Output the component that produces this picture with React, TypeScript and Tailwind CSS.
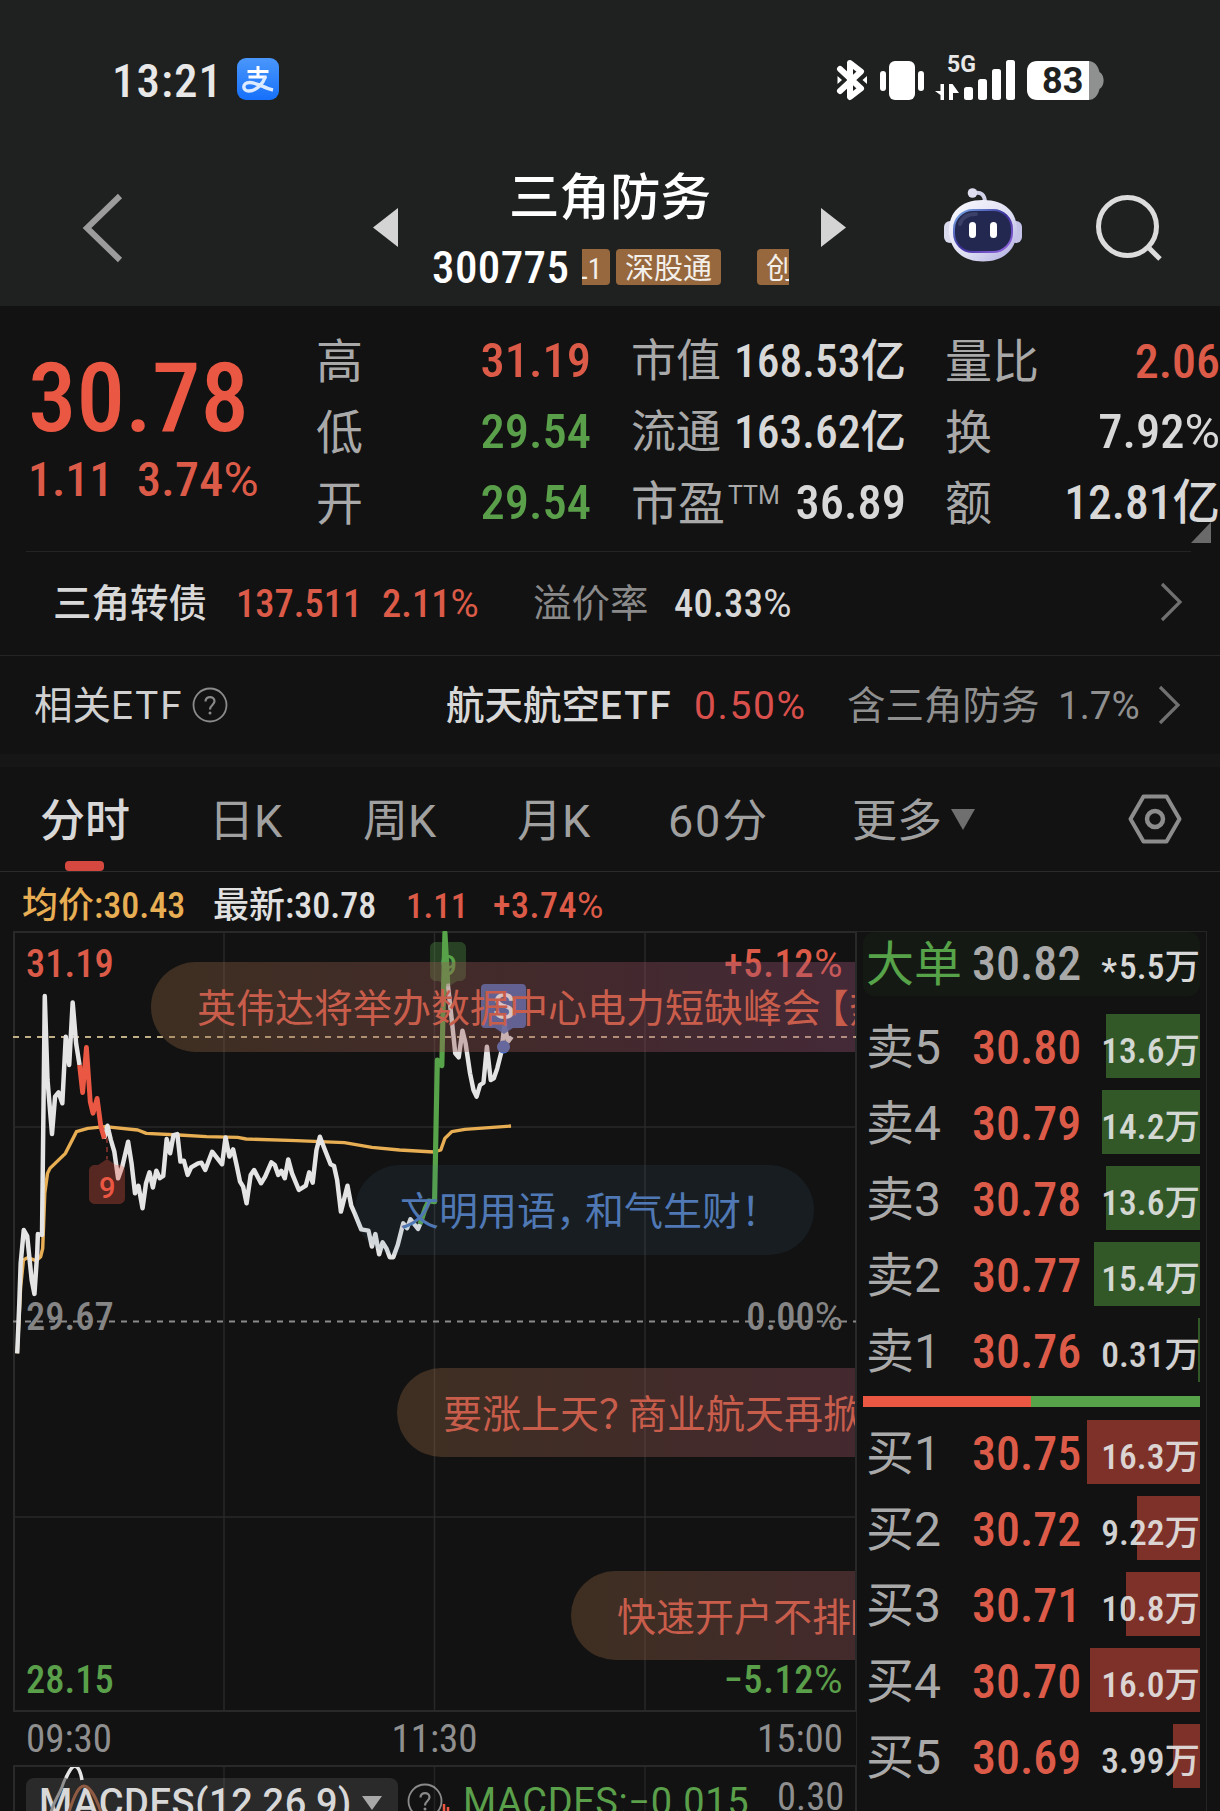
import React from 'react';
import clsx from 'clsx';

type Level = { label: string; price: string; volume: string; bar: number };

const SELL_LEVELS: Level[] = [
  { label: '卖5', price: '30.80', volume: '13.6万', bar: 94 },
  { label: '卖4', price: '30.79', volume: '14.2万', bar: 98 },
  { label: '卖3', price: '30.78', volume: '13.6万', bar: 94 },
  { label: '卖2', price: '30.77', volume: '15.4万', bar: 106 },
  { label: '卖1', price: '30.76', volume: '0.31万', bar: 2 },
];

const BUY_LEVELS: Level[] = [
  { label: '买1', price: '30.75', volume: '16.3万', bar: 113 },
  { label: '买2', price: '30.72', volume: '9.22万', bar: 63 },
  { label: '买3', price: '30.71', volume: '10.8万', bar: 74 },
  { label: '买4', price: '30.70', volume: '16.0万', bar: 110 },
  { label: '买5', price: '30.69', volume: '3.99万', bar: 27 },
];

// Chart series, drawn in a 1568x1320 plot space (see the <g> transform in PriceChart)
const PRICE_OPEN = '50,1300 56,1150 60,1030 69,930 79,948 92,1080 100,1122 108,1000 110,942 122,945 130,228 138,480 151,642 160,530 170,517 181,550 191,350 201,435 211,247 221,370 231,435';
const PRICE_DOWN = '231,435 240,518 251,382 262,545 270,580 282,535 293,620 303,656';
const PRICE_MID = '303,656 312,617 322,660 332,695 343,775 355,740 372,665 382,730 392,820 402,797 414,865 424,790 434,757 444,803 454,752 464,775 474,768 484,657 494,700 504,645 515,642 524,725 534,722 545,765 555,742 575,730 585,728 596,750 616,695 645,733 655,652 666,710 677,688 687,735 697,785 706,800 716,850 728,765 738,750 758,790 770,770 788,727 798,735 808,765 817,752 827,775 837,718 848,760 868,810 888,797 898,757 908,788 919,690 929,650 940,680 960,733 970,738 979,780 990,875 1009,797 1020,857 1030,880 1049,928 1070,932 1080,980 1090,942 1101,1003 1111,967 1122,985 1132,1012 1142,1012 1155,975 1171,910 1182,925 1192,898 1214,927 1220,912';
const PRICE_UP = '1220,912 1235,865 1245,843 1262,845 1270,420 1283,437 1292,38 1300,190';
const PRICE_CLOSE = '1300,190 1312,300 1322,400 1332,412 1343,332 1352,370 1365,460 1375,510 1384,530 1394,495 1404,488 1414,380 1425,480 1434,475 1444,445 1455,400 1465,315 1475,365 1486,350';
const AVERAGE = '50,1300 60,1100 68,1020 80,1013 105,1022 118,1010 124,985 130,820 138,760 145,745 190,700 222,635 255,625 305,620 400,630 425,640 520,645 600,650 690,652 715,657 860,662 1000,668 1080,682 1160,690 1260,696 1280,690 1292,655 1312,635 1350,628 1484,618';

const AlipayIcon = () => (
  <svg width="42" height="42" viewBox="0 0 42 42" fill="none">
    <defs>
      <linearGradient id="alipay" x1="0" y1="0" x2="0" y2="1">
        <stop stopColor="#4a97fb" />
        <stop offset="1" stopColor="#1670fb" />
      </linearGradient>
    </defs>
    <rect width="42" height="42" rx="9" fill="url(#alipay)" />
    <path d="M10.500 13.500H31.500M21 8V19M11.500 19H29.500" stroke="#fff" strokeWidth="3" />
    <path d="M28.500 18.500C26 26 19 33 12 33C5 33 5 24.500 12.500 24.500C20 24.500 27 30 36 32" stroke="#dcebff" strokeWidth="3.400" />
  </svg>
);

const BluetoothIcon = () => (
  <svg width="32" height="42" viewBox="0 0 32 42" fill="none">
    <path d="M4 10L25 29.500L14 38V4L25 12.500L4 32" stroke="#fff" strokeWidth="6" strokeLinecap="round" strokeLinejoin="round" />
    <path d="M1.500 17L6 21L1.500 25ZM31 17L26.500 21L31 25Z" fill="#fff" />
  </svg>
);

const VibrateIcon = () => (
  <svg width="44" height="40" viewBox="0 0 44 40" fill="#fff">
    <rect x="9" y="0" width="26" height="39" rx="6" />
    <rect x="0" y="10" width="6" height="20" rx="3" />
    <rect x="38" y="10" width="6" height="20" rx="3" />
  </svg>
);

const SignalIcon = () => (
  <svg width="80" height="46" viewBox="0 0 80 46" fill="#fff">
    <path d="M9 29V45H5.500V40L0 36H5.500V29ZM14 29H17.500L24 38H18V45H14Z" />
    <rect x="29" y="32" width="9" height="13" rx="2.500" />
    <rect x="43" y="24" width="9" height="21" rx="2.500" />
    <rect x="57" y="14" width="9" height="31" rx="2.500" />
    <rect x="71" y="5" width="9" height="40" rx="2.500" />
  </svg>
);

const BatteryIcon = () => (
  <svg width="77" height="40" viewBox="0 0 77 40">
    <path d="M61 0C68 0 71 5 72.500 11C78 14 78 25 72.500 28C71 34 68 39 61 39Z" fill="#8f9190" />
    <path d="M10 0H62V39H10C4 39 0 35 0 29V10C0 4 4 0 10 0Z" fill="#fff" />
  </svg>
);

const RobotIcon = () => (
  <svg width="78" height="74" viewBox="0 0 78 74" fill="none">
    <defs>
      <linearGradient id="shell" x1="0.1" y1="0.1" x2="0.9" y2="0.9">
        <stop stopColor="#f6f6fd" />
        <stop offset="0.6" stopColor="#dcdcf2" />
        <stop offset="1" stopColor="#b9b6e4" />
      </linearGradient>
      <linearGradient id="rim" x1="0" y1="0" x2="1" y2="1">
        <stop stopColor="#7fb4ee" />
        <stop offset="0.5" stopColor="#3a2f9a" />
        <stop offset="1" stopColor="#9d6ce8" />
      </linearGradient>
    </defs>
    <path d="M29 5.500C37 3 41 7 41 15" stroke="#cfcfe8" strokeWidth="4" />
    <circle cx="28.500" cy="5" r="4.800" fill="#dedef0" />
    <rect x="0" y="33" width="12" height="22" rx="6" fill="#d9d9ee" />
    <rect x="66" y="33" width="12" height="22" rx="6" fill="#c4c2e6" />
    <path d="M39 12C62 12 73 25 73 42C73 61 60 73.500 39 73.500C18 73.500 5 61 5 42C5 25 16 12 39 12Z" fill="url(#shell)" />
    <rect x="10" y="22" width="58" height="42" rx="19" fill="#232850" stroke="url(#rim)" strokeWidth="2" />
    <path d="M16 36C18 29 24 26 32 26" stroke="#4a5078" strokeWidth="4" strokeLinecap="round" opacity="0.6" />
    <rect x="25" y="34" width="7" height="16" rx="3.500" fill="#fff" />
    <rect x="46" y="34" width="7" height="16" rx="3.500" fill="#fff" />
  </svg>
);

const Chevron = ({ className }: { className?: string }) => (
  <svg className={className} width="24" height="40" viewBox="0 0 24 40" fill="none">
    <path d="M3 2L21 20L3 38" stroke="#707070" strokeWidth="3.200" />
  </svg>
);

const HelpIcon = ({ className }: { className?: string }) => (
  <svg className={className} width="36" height="36" viewBox="0 0 36 36" fill="none" stroke="#8a8a8a">
    <circle cx="18" cy="18" r="16.500" strokeWidth="1.800" />
    <path d="M13.500 14.500C13.500 8.500 22.500 8.800 22.500 14.300C22.500 18 18 18 18 22.500" strokeWidth="2.200" />
    <circle cx="18" cy="26" r="1.500" fill="#8a8a8a" stroke="none" />
  </svg>
);

// Percent values use a lighter, wider % sign than the digits
const Percent = ({ value }: { value: string }) => (
  <>
    {value.replace('%', '')}
    <span className="font-['Roboto'] font-normal">%</span>
  </>
);

const StatusBar = () => (
  <div className="flex h-[160px] items-center pb-[2px] pl-[112px]">
    <span className="w-[125px] pt-[2px] text-[47px] font-medium tracking-[1px] text-[#e8e8e8]">13:21</span>
    <AlipayIcon />
    <div className="ml-[557px] flex items-center pt-px">
      <BluetoothIcon />
      <div className="mt-[2px] ml-3"><VibrateIcon /></div>
      <div className="relative -mt-[3px] ml-[11px]">
        <SignalIcon />
        <span className="absolute -top-[2px] left-[12px] font-['Roboto'] text-[23px] font-bold text-[#e8e8e8]">5G</span>
      </div>
      <div className="relative mt-[2px] ml-3">
        <BatteryIcon />
        <span className="absolute top-[2px] left-[15px] font-['Roboto'] text-[36px] leading-[36px] font-bold text-[#1f2120]">83</span>
      </div>
    </div>
  </div>
);

const TAG = 'h-[36px] shrink-0 rounded-[4px] bg-[#97683d] text-[29px] leading-[40px] text-[#f3efea]';

const TitleBar = () => (
  <div className="flex h-[145px] items-start">
    <svg className="mt-[33px] ml-[82px]" width="42" height="70" viewBox="0 0 42 70" fill="none">
      <path d="M38 3L5 35L38 67" stroke="#9c9c9c" strokeWidth="6" />
    </svg>
    <svg className="mt-[48px] ml-[249px]" width="25" height="39" viewBox="0 0 25 39">
      <path d="M25 0V39L0 19.500Z" fill="#d4d4d4" />
    </svg>
    <div className="ml-[34px] w-[357px]">
      <div className="pt-[12px] pr-px text-center text-[50.500px] leading-[52px] font-medium text-white">三角防务</div>
      <div className="mt-[25px] flex h-[36px] items-center">
        <span className="w-[150px] text-[45px] font-medium tracking-[0.400px] text-white">300775</span>
        <div className="flex w-[207px] items-center overflow-hidden">
          <div className={clsx(TAG, '-ml-[14px] w-[42px] pl-[6px]')}>L1</div>
          <div className={clsx(TAG, 'ml-[6px] w-[105px] text-center')}>深股通</div>
          <div className={clsx(TAG, 'ml-[36px] w-[60px] pl-[9px]')}>创</div>
        </div>
      </div>
    </div>
    <svg className="mt-[48px] ml-[32px]" width="25" height="39" viewBox="0 0 25 39">
      <path d="M0 0V39L25 19.500Z" fill="#d4d4d4" />
    </svg>
    <div className="mt-[28px] ml-[98px]"><RobotIcon /></div>
    <svg className="mt-[34px] ml-[73px]" width="68" height="68" viewBox="0 0 68 68" fill="none" stroke="#dcdcdc">
      <circle cx="32.500" cy="32.500" r="29" strokeWidth="5" />
      <path d="M53 53L65 65" strokeWidth="5" />
    </svg>
  </div>
);

type StatProps = { label: string; sup?: string; value: React.ReactNode; labelSize?: string; size?: string; tone?: string };

const Stat = ({ label, sup, value, labelSize = 'text-[47px]', size = 'text-[48.500px]', tone = 'text-[#d8d8d8]' }: StatProps) => (
  <div className="flex h-[71px] items-center justify-between whitespace-nowrap">
    <span className={clsx('flex items-center text-[#a9a9a9]', labelSize)}>
      {label}
      {sup && <span className="-mt-[16px] ml-[3px] font-['Roboto'] text-[25px]">{sup}</span>}
    </span>
    <span className={clsx('font-medium', size, tone)}>{value}</span>
  </div>
);

const QuoteSummary = () => (
  <div className="relative flex h-[246px]">
    <div className="w-[316px] pl-[28px] text-[#ea5743]">
      <div className="mt-[46px] text-[97px] leading-[92px] font-medium">30.78</div>
      <div className="mt-[9px] flex text-[48px] leading-[54px] font-medium text-[#dc5b48]">
        <span className="w-[109px]">1.11</span>
        <span className="tracking-[0.300px]"><Percent value="3.74%" /></span>
      </div>
    </div>
    <div className="w-[275px] pt-[20px]">
      <Stat label="高" value="31.19" tone="text-[#dc5b48]" />
      <Stat label="低" value="29.54" tone="text-[#5a9f4a]" />
      <Stat label="开" value="29.54" tone="text-[#5a9f4a]" />
    </div>
    <div className="ml-[40px] w-[275px] pt-[20px]">
      <Stat label="市值" value="168.53亿" labelSize="text-[45px]" size="text-[45.500px]" />
      <Stat label="流通" value="163.62亿" labelSize="text-[45px]" size="text-[45.500px]" />
      <Stat label="市盈" sup="TTM" value="36.89" />
    </div>
    <div className="ml-[39px] w-[275px] pt-[20px]">
      <Stat label="量比" value="2.06" size="text-[48px]" tone="text-[#dc5b48]" />
      <Stat label="换" value={<Percent value="7.92%" />} />
      <Stat label="额" value="12.81亿" size="text-[47.500px]" />
    </div>
    <svg className="absolute right-[9px] bottom-[9px]" width="20" height="21" viewBox="0 0 20 21">
      <path d="M20 0V21H0Z" fill="#6a6a6a" />
    </svg>
  </div>
);

const BondRow = () => (
  <div className="flex h-[104px] items-center pl-[53px] text-[38.500px] whitespace-nowrap">
    <span className="w-[183px] font-medium text-[#d8d8d8]">三角转债</span>
    <span className="w-[146px] font-medium text-[#dc5b48]">137.511</span>
    <span className="w-[151px] font-medium text-[#dc5b48]"><Percent value="2.11%" /></span>
    <span className="w-[141px] text-[#8a8a8a]">溢价率</span>
    <span className="font-medium tracking-[0.300px] text-[#d8d8d8]"><Percent value="40.33%" /></span>
    <Chevron className="mr-[37px] mb-[5px] ml-auto" />
  </div>
);

const EtfRow = () => (
  <div className="flex h-[98px] items-center pt-[2px] pl-[34px] font-['Roboto','Noto_Sans_CJK_SC',sans-serif] text-[38.500px] whitespace-nowrap">
    <span className="w-[158px] text-[#d0d0d0]">相关<span className="tracking-[2px]">ETF</span></span>
    <HelpIcon className="-mt-[3px]" />
    <span className="ml-[218px] w-[248px] font-medium text-[#d8d8d8]">航天航空<span className="tracking-[2px]">ETF</span></span>
    <span className="w-[153px] text-[39px] tracking-[1.600px] text-[#d94f4c]">0.50%</span>
    <span className="w-[211px] text-[#8f8f8f]">含三角防务</span>
    <span className="text-[#8f8f8f]">1.7%</span>
    <Chevron className="mr-[39px] mb-[3px] ml-auto" />
  </div>
);

const TABS = [
  { name: '分时', width: 'w-[169px]' },
  { name: '日K', width: 'w-[154px]' },
  { name: '周K', width: 'w-[154px]' },
  { name: '月K', width: 'w-[151px]' },
  { name: '60分', width: 'w-[184px] tracking-[1.800px]' },
  { name: '更多', width: 'w-[99px]' },
];

const PeriodTabs = () => (
  <div className="flex h-[105px] items-center border-b border-[#2b2b2b] pl-[40px] font-['Roboto','Noto_Sans_CJK_SC',sans-serif] text-[45px] text-[#a0a0a0]">
    {TABS.map((tab, i) => (
      <div key={tab.name} className={clsx('relative h-full shrink-0 whitespace-nowrap leading-[110px]', tab.width, i === 0 && 'font-medium text-[#d8d8d8]')}>
        {tab.name}
        {i === 0 && <span className="absolute bottom-0 left-[25px] h-[10px] w-[39px] rounded-[4px] bg-[#d4483f]" />}
      </div>
    ))}
    <svg width="24" height="21" viewBox="0 0 24 21">
      <path d="M0 0H24L12 21Z" fill="#6f6f6f" />
    </svg>
    <svg className="ml-[153px]" width="54" height="50" viewBox="0 0 54 50" fill="none" stroke="#8c8c8c" strokeWidth="4">
      <path d="M15.500 2.500H38.500L51.500 25L38.500 47.500H15.500L2.500 25Z" strokeLinejoin="round" />
      <circle cx="27" cy="25" r="8" strokeWidth="4.500" />
    </svg>
  </div>
);

const InfoRow = () => (
  <div className="flex h-[59px] items-center pt-[9px] pl-[22px] text-[36px] font-medium whitespace-nowrap">
    <span className="w-[191px] text-[#e8ae53]">均价:30.43</span>
    <span className="w-[193px] text-[#e0e0e0]">最新:30.78</span>
    <span className="w-[87px] text-[35px] text-[#dc5b48]">1.11</span>
    <span className="tracking-[0.500px] text-[#dc5b48]"><Percent value="+3.74%" /></span>
  </div>
);

const PriceChart = () => (
  <svg className="absolute inset-0" width="844" height="781" viewBox="13 931 844 781" fill="none">
    <g stroke="#292929" strokeWidth="2">
      <path d="M14 932H856V1711H14Z" />
      <path d="M224 932V1711M434.500 932V1711M645 932V1711M14 1127H856M14 1517H856" strokeWidth="1.500" />
    </g>
    <path d="M13 1037H856" stroke="#bfae86" strokeWidth="2" strokeDasharray="6 6" />
    <path d="M13 1321.500H856" stroke="#8a8a8a" strokeWidth="2" strokeDasharray="6 6" />
    <g transform="translate(0 920) scale(0.34436 0.33333)" strokeLinejoin="round">
      <polyline points={AVERAGE} stroke="#e8ae53" strokeWidth="10" />
      <polyline points={PRICE_OPEN} stroke="#e4e4e4" strokeWidth="13" />
      <polyline points={PRICE_MID} stroke="#e4e4e4" strokeWidth="13" />
      <polyline points={PRICE_CLOSE} stroke="#e4e4e4" strokeWidth="13" />
      <polyline points={PRICE_DOWN} stroke="#ea5743" strokeWidth="14" />
      <polyline points={PRICE_UP} stroke="#57a349" strokeWidth="15" />
    </g>
    <path d="M107 1138V1159" stroke="#6d2c25" strokeWidth="2" strokeDasharray="5 4" />
    <path d="M95 1165H98L107 1159L116 1165H119C122.500 1165 125 1167.500 125 1171V1198C125 1201.500 122.500 1204 119 1204H95C91.500 1204 89 1201.500 89 1198V1171C89 1167.500 91.500 1165 95 1165Z" fill="#ea5743" fillOpacity="0.32" />
    <path d="M436 942H460C463.500 942 466 944.500 466 948V975C466 978.500 463.500 981 460 981H457L448 987L439 981H436C432.500 981 430 978.500 430 975V948C430 944.500 432.500 942 436 942Z" fill="#57a349" fillOpacity="0.32" />
    <path d="M485 984H522C524.500 984 526 985.500 526 988V1024C526 1026.500 524.500 1028 522 1028H513L504 1034L495 1028H485C482.500 1028 481 1026.500 481 1024V988C481 985.500 482.500 984 485 984Z" fill="#4a72c4" fillOpacity="0.9" />
    <circle cx="503.500" cy="1047" r="6.500" fill="#4a72c4" />
  </svg>
);

const WARM = 'from-[#8d623c5c] via-[#9a535a5c] to-[#9e51845c] text-[#c95d4b]';

const Danmaku = () => (
  <div className="absolute inset-0 w-[842px] overflow-hidden text-[39px] leading-[95px] font-normal whitespace-nowrap">
    <div className={clsx('absolute top-[31px] left-[138px] h-[90px] w-[820px] rounded-full bg-linear-to-r pl-[46px]', WARM)}>
      英伟达将举办数据中心电力短缺峰会<span className="-ml-[11px]">【</span>热股
    </div>
    <div className="absolute top-[234px] left-[342px] h-[90px] w-[459px] rounded-full bg-[#44769e1c] pl-[45px] text-[#4f78b4]">
      文明用语<span className="-mr-[10px]">，</span>和气生财！
    </div>
    <div className={clsx('absolute top-[437px] left-[384px] h-[89px] w-[760px] rounded-full bg-linear-to-r pl-[46px]', WARM)}>
      要涨上天<span className="-mr-[10px]">？</span>商业航天再掀高潮
    </div>
    <div className={clsx('absolute top-[640px] left-[558px] h-[89px] w-[600px] rounded-full bg-linear-to-r pl-[46px]', WARM)}>
      快速开户不排<span className="-ml-[2px]">队</span>
    </div>
  </div>
);

const ChartPane = () => (
  <div className="relative h-[781px] w-[844px] text-[38.500px] leading-[40px] font-medium">
    <div className="flex h-[354px] justify-between pt-[13px] pr-[14px] pl-[13px] text-[#dc5b48]">
      <span>31.19</span>
      <span className="tracking-[0.600px]"><Percent value="+5.12%" /></span>
    </div>
    <div className="flex h-[362px] justify-between pt-[12px] pr-[14px] pl-[13px] text-[#858585]">
      <span>29.67</span>
      <span><Percent value="0.00%" /></span>
    </div>
    <div className="flex justify-between pt-[13px] pr-[14px] pl-[13px] text-[#5a9f4a]">
      <span>28.15</span>
      <span className="tracking-[0.600px]"><Percent value="−5.12%" /></span>
    </div>
    <PriceChart />
    <span className="absolute top-[15px] left-[427px] font-['Roboto'] text-[30px] text-[#57a349]">9</span>
    <span className="absolute top-[237px] left-[86px] font-['Roboto'] text-[29px] text-[#ea5743]">9</span>
    <span className="absolute top-[56px] left-[480px] font-['Roboto'] text-[36px] text-white">S</span>
    <Danmaku />
  </div>
);

const TimeAxis = () => (
  <div className="flex h-[53px] items-center justify-between pt-[2px] pr-[14px] pl-[13px] text-[39px] text-[#8f8f8f]">
    <span>09:30</span>
    <span>11:30</span>
    <span>15:00</span>
  </div>
);

const MacdPane = () => (
  <div className="relative flex h-[47px] w-[844px] items-start overflow-hidden border-x-2 border-t-2 border-[#292929] text-[38px] leading-[50px] whitespace-nowrap">
    <div className="mt-[11px] ml-[11px] flex h-[60px] w-[372px] items-start rounded-[8px] bg-[#2a2a2a] pl-[13px] font-['Roboto','Noto_Sans_CJK_SC',sans-serif] text-[38px] font-medium tracking-[0.600px] text-[#d8d8d8]">
      <span className="w-[323px]">MACDES(12,26,9)</span>
      <svg className="mt-[18px]" width="20" height="14" viewBox="0 0 20 14">
        <path d="M0 0H20L10 14Z" fill="#a8a8a8" />
      </svg>
    </div>
    <HelpIcon className="mt-[16px] ml-[9px]" />
    <span className="mt-[10px] ml-[20px] w-[315px] font-['Roboto','Noto_Sans_CJK_SC',sans-serif] text-[38px] tracking-[0.600px] text-[#5a9f4a]">MACDES:−0.015</span>
    <span className="mt-[5px] -ml-px text-[38.500px] text-[#8f8f8f]">0.30</span>
    <svg className="absolute -top-[2px] -left-[2px]" width="844" height="47" viewBox="13 1764 844 47" fill="none">
      <path d="M224 1764V1811M434.500 1764V1811M645 1764V1811" stroke="#ffffff" strokeOpacity="0.08" strokeWidth="1.500" />
      <path d="M51 1811C54 1800 58 1796 62 1786C64 1780 66 1776 67 1775" stroke="#909090" strokeWidth="3" />
      <path d="M66 1777C70 1768 73 1765 75 1765C79 1766 81 1773 82 1779" stroke="#e4e4e4" strokeWidth="3.500" />
      <path d="M69 1811C75 1792 79 1785 84 1785C91 1786 96 1797 101 1811" stroke="#8f5a42" strokeWidth="3" />
      <path d="M444 1803V1811M448 1806V1811" stroke="#ea5743" strokeWidth="2.500" />
    </svg>
  </div>
);

const BookRow = ({ level, side }: { level: Level; side: 'sell' | 'buy' }) => (
  <div className="relative flex h-[64px] items-center justify-end">
    <div className={clsx('h-full', side === 'sell' ? 'bg-[#325828]' : 'bg-[#7d3128]')} style={{ width: level.bar }} />
    <div className="absolute inset-0 flex items-center pt-[3px] pl-[3px] whitespace-nowrap">
      <span className="w-[106px] pt-px font-['Roboto','Noto_Sans_CJK_SC',sans-serif] text-[48px] text-[#a9a9a9]">{level.label}</span>
      <span className="text-[48px] font-medium text-[#dc5b48]">{level.price}</span>
      <span className="mt-[8px] ml-auto text-[35.500px] font-medium text-[#e6e6e6] opacity-90">{level.volume}</span>
    </div>
  </div>
);

const OrderBook = () => (
  <div className="h-[881px] w-[351px] border border-[#252525] px-[6px]">
    <div className="flex h-[64px] items-center rounded-[12px] bg-[#141a13] pl-[3px] whitespace-nowrap">
      <span className="w-[106px] pt-px text-[48px] text-[#57a349]">大单</span>
      <span className="text-[48px] font-medium text-[#a9a9a9]">30.82</span>
      <span className="mt-[11px] ml-auto flex text-[35.500px] font-medium text-[#d8d8d8]">
        <span className="mt-[4px] mr-[2px]">*</span>5.5万
      </span>
    </div>
    <div className="mt-[18px] flex flex-col gap-3">
      {SELL_LEVELS.map((level) => <BookRow key={level.label} level={level} side="sell" />)}
    </div>
    <div className="mt-[14px] flex h-[11px]">
      <div className="w-[168px] bg-[#ea5743]" />
      <div className="flex-1 bg-[#57a349]" />
    </div>
    <div className="mt-[13px] flex flex-col gap-3">
      {BUY_LEVELS.map((level) => <BookRow key={level.label} level={level} side="buy" />)}
    </div>
  </div>
);

export default function App() {
  return (
    <div className="h-[1811px] w-[1220px] overflow-hidden bg-[#121212] font-['Roboto_Condensed','Noto_Sans_CJK_SC',sans-serif] leading-none">
      <header className="h-[306px] bg-[#1f2120]">
        <StatusBar />
        <TitleBar />
      </header>
      <QuoteSummary />
      <div className="mr-[29px] ml-[26px] h-px -mt-px bg-[#242424]" />
      <BondRow />
      <div className="-mt-px h-px bg-[#252525]" />
      <EtfRow />
      <div className="h-[13px] bg-[#161616]" />
      <PeriodTabs />
      <InfoRow />
      <div className="flex items-start">
        <div className="ml-[13px] w-[844px]">
          <ChartPane />
          <TimeAxis />
          <MacdPane />
        </div>
        <div className="-ml-px"><OrderBook /></div>
      </div>
    </div>
  );
}
